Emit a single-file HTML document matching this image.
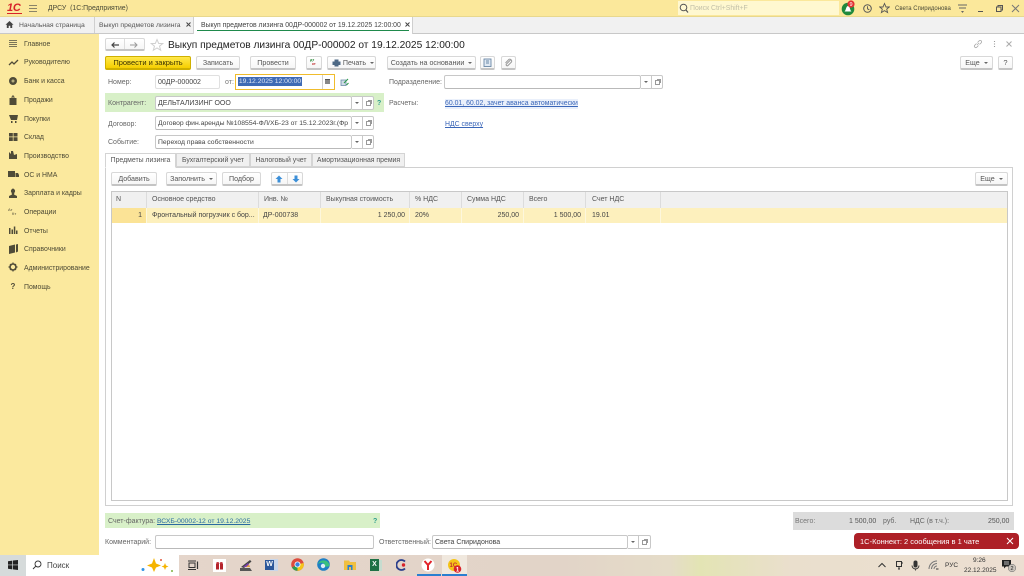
<!DOCTYPE html>
<html lang="ru"><head><meta charset="utf-8"><title>ДРСУ</title>
<style>
html,body{margin:0;padding:0;width:1024px;height:576px;overflow:hidden;background:#fff}
body{font-family:"Liberation Sans","Noto Sans CJK SC",sans-serif;font-size:6.8px;color:#4a4a4a}
#w{position:absolute;left:0;top:0;width:1024px;height:576px;overflow:hidden;filter:blur(.3px)}
.a{position:absolute;white-space:nowrap}
.t{position:absolute;white-space:nowrap;line-height:10px;height:10px;margin-top:1px}
.b{position:absolute;box-sizing:border-box;background:linear-gradient(#fff,#f6f6f6);border:1px solid #d8d8d8;border-bottom:2px solid #c4c4c4;border-radius:2px;text-align:center;line-height:12px;height:14px;color:#555;white-space:nowrap;font-size:7.1px}
.b s{display:inline-block;text-decoration:none;border:2px solid transparent;border-top:2px solid #666;border-bottom:0;margin-left:4px;vertical-align:1px}
.f{position:absolute;box-sizing:border-box;background:#fff;border:1px solid #c8c8c8;border-bottom:1px solid #b9b9b9;border-radius:2px;height:14px;line-height:13px;padding-left:2px;color:#444;white-space:nowrap;overflow:hidden;font-size:7px}
.dd{position:absolute;box-sizing:border-box;background:#fff;border:1px solid #c8c8c8;border-left:0;height:14px;width:22px;border-radius:0 2px 2px 0}
.dd:before{content:"";position:absolute;left:3px;top:5px;border:2px solid transparent;border-top:2px solid #666;border-bottom:0}
.dd:after{content:"";position:absolute;left:10px;top:0;bottom:0;border-left:1px solid #c8c8c8}
.dd i{position:absolute;left:14px;top:4px;width:3px;height:3px;border:1px solid #999;background:#fff}
.dd u{position:absolute;left:15.500px;top:2.500px;width:3px;height:3px;border-top:1px solid #999;border-right:1px solid #999}
.m{position:absolute;left:24px;line-height:10px;height:10px;color:#4d4a35;font-size:6.900px;white-space:nowrap}
.tab{position:absolute;top:153px;height:14px;box-sizing:border-box;background:#f0f0f0;border:1px solid #d4d4d4;text-align:center;line-height:13px;color:#555;white-space:nowrap;font-size:6.900px}
.h{position:absolute;top:192px;height:16px;line-height:15px;background:#f0f0f0;border-right:1px solid #dcdcdc;box-sizing:border-box;padding-left:5px;color:#555;white-space:nowrap;font-size:7px}
.c{position:absolute;top:208px;height:15px;line-height:16px;box-sizing:border-box;padding:0 4px;border-right:1px solid #fdf7dc;color:#444;white-space:nowrap;overflow:hidden;font-size:7px}
.l{font-size:7px;color:#666}
a{color:#3a66b8;text-decoration:underline}
</style></head><body><div id="w">

<!-- top bar -->
<div class="a" style="left:0;top:0;width:1024px;height:17px;background:#fbe89b;border-bottom:1px solid #e8d88e;box-sizing:border-box"></div>
<div class="a" style="left:7px;top:2px;font:italic bold 11px/12px 'Liberation Sans',sans-serif;color:#d8232a;letter-spacing:-.3px">1С</div>
<div class="a" style="left:7px;top:13px;width:15px;height:1px;background:#d8232a"></div>
<svg class="a" style="left:29px;top:4px" width="9" height="9"><path d="M0 1.500H8M0 4.500H8M0 7.500H8" stroke="#8a8468" stroke-width="1"/></svg>
<div class="t" style="left:48px;top:3px;color:#4a4a38;font-size:6.900px">ДРСУ&nbsp; (1С:Предприятие)</div>
<div class="a" style="left:678px;top:1px;width:161px;height:14px;background:#fff8d0"></div>
<svg class="a" style="left:679px;top:3px" width="10" height="11"><circle cx="4.500" cy="4.500" r="3.300" fill="none" stroke="#555" stroke-width="1"/><path d="M7 7L9 9.500" stroke="#555" stroke-width="1.200"/></svg>
<div class="t" style="left:690px;top:3px;color:#c2bfa8;font-size:6.900px">Поиск Ctrl+Shift+F</div>
<svg class="a" style="left:841px;top:0" width="16" height="16"><circle cx="7" cy="9" r="6.300" fill="#1f8a3c"/><path d="M3.500 11.500C5 10.500 5 6 7 6S9 10.500 10.500 11.500Z" fill="#fff"/><circle cx="10" cy="4" r="3.600" fill="#e23232"/><text x="10" y="6" font-size="5.500" font-family="Liberation Sans" fill="#fff" text-anchor="middle">9</text></svg>
<svg class="a" style="left:862px;top:3px" width="11" height="11"><circle cx="5.500" cy="5.500" r="3.800" fill="none" stroke="#555" stroke-width="1"/><path d="M5.500 3.200V5.800L7.300 6.800" fill="none" stroke="#555" stroke-width=".9"/></svg>
<svg class="a" style="left:879px;top:2px" width="11" height="12"><path d="M5.500 1.500L7 5H10.300L7.700 7.200L8.600 10.500L5.500 8.600L2.400 10.500L3.300 7.200L.7 5H4Z" fill="none" stroke="#555" stroke-width=".9"/></svg>
<div class="t" style="left:895px;top:3px;color:#4a4a38;font-size:6px">Света Спиридонова</div>
<svg class="a" style="left:957px;top:4px" width="11" height="10"><path d="M1 1H10M2 4H9" stroke="#666" stroke-width="1"/><path d="M4 7H7L5.500 9Z" fill="#666"/></svg>
<div class="a" style="left:978px;top:11px;width:5px;height:1px;background:#555"></div>
<svg class="a" style="left:995px;top:4px" width="9" height="9"><path d="M1.500 3H6V7.500H1.500ZM3 3V1.500H7.500V6H6" fill="none" stroke="#555" stroke-width="1"/></svg>
<svg class="a" style="left:1011px;top:4px" width="9" height="9"><path d="M1 1L8 8M8 1L1 8" stroke="#777" stroke-width="1"/></svg>

<!-- tab bar -->
<div class="a" style="left:0;top:17px;width:1024px;height:17px;background:#f1f1f1;border-bottom:1px solid #c8c8c8;box-sizing:border-box"></div>
<svg class="a" style="left:5px;top:20px" width="9" height="9"><path d="M4.500 1L8.500 4.800H7.200V8H5.300V5.800H3.700V8H1.800V4.800H.5Z" fill="#444"/></svg>
<div class="t" style="left:19px;top:19.500px;color:#555;font-size:6.800px">Начальная страница</div>
<div class="a" style="left:94px;top:17px;width:1px;height:16px;background:#cfcfcf"></div>
<div class="t" style="left:99px;top:19.500px;color:#555;font-size:6.800px">Выкуп предметов лизинга</div>
<svg class="a" style="left:186px;top:22px" width="5" height="5"><path d="M.5 .5L4.500 4.500M4.500 .5L.5 4.500" stroke="#444" stroke-width="1"/></svg>
<div class="a" style="left:193px;top:17px;width:220px;height:17px;background:#fff;border-left:1px solid #cfcfcf;border-right:1px solid #cfcfcf;box-sizing:border-box"></div>
<div class="a" style="left:197px;top:30px;width:212px;height:1px;background:#1f8a4c"></div>
<div class="t" style="left:201px;top:19.500px;color:#444;font-size:6.870px">Выкуп предметов лизинга 00ДР-000002 от 19.12.2025 12:00:00</div>
<svg class="a" style="left:405px;top:22px" width="5" height="5"><path d="M.5 .5L4.500 4.500M4.500 .5L.5 4.500" stroke="#444" stroke-width="1"/></svg>

<!-- sidebar -->
<div class="a" style="left:0;top:34px;width:99px;height:521px;background:#fbe99e"></div>
<svg class="a" style="left:8px;top:39px" width="14" height="260" fill="#4f4b38">
<path d="M1 1.500H9M1 3.500H9M1 5.500H9M1 7.500H9" stroke="#7a7558" stroke-width=".9"/>
<path d="M1 26L4 23L6 25L10 21" fill="none" stroke="#4f4b38" stroke-width="1.300"/>
<circle cx="5" cy="42" r="4"/><circle cx="5" cy="42" r="1.500" fill="#b5ad7e"/>
<path d="M1.500 59H8.500V66H1.500ZM3.500 59C3.500 55.500 6.500 55.500 6.500 59H5.500C5.500 57 4.500 57 4.500 59Z"/>
<path d="M1 76H10L9 81H3ZM3 82H4.500V84H3ZM7 82H8.500V84H7Z"/>
<g transform="translate(0,-1)"><path d="M1 95H4.800V98.500H1ZM5.500 95H9.500V98.500H5.500ZM1 99.300H4.800V103H1ZM5.500 99.300H9.500V103H5.500Z"/></g>
<g transform="translate(0,-1)"><path d="M1 121V114L3 116V113H5L6 117L9 116V121Z"/></g>
<path d="M0 132H7V138H0ZM7.500 134H10L11 136V138H7.500Z"/>
<g transform="translate(0,3)"><path d="M3.500 150.500A2 2.300 0 1 1 6.500 150.500L6 152.500L9 154V156H1V154L4 152.500Z"/></g>
<text x="0" y="172" font-size="4" font-family="Liberation Sans">Aт</text><text x="4" y="176" font-size="4" font-family="Liberation Sans">Кт</text>
<g transform="translate(0,-1)"><path d="M1 190H2.500V196H1ZM3.500 191.500H5V196H3.500ZM5.800 188.500H7.300V196H5.800ZM8 192.500H9.500V196H8Z"/></g>
<g transform="translate(0,-1)"><path d="M1 208L7 206.500V214.500L1 216ZM8 206.500L10 206V213.500L8 214.500Z"/></g>
<g transform="translate(0,-2)"><circle cx="5" cy="230" r="3" fill="none" stroke="#4f4b38" stroke-width="1.600"/><path d="M5 225.500V227M5 233V234.500M.5 230H2M8 230H9.500M2 227L3 228M7 232L8 233M8 227L7 228M3 232L2 233" stroke="#4f4b38" stroke-width="1.200"/></g>
<g transform="translate(0,-2)"><text x="2.500" y="252" font-size="8" font-weight="bold" font-family="Liberation Sans">?</text></g>
</svg>
<div class="m" style="top:40px">Главное</div>
<div class="m" style="top:58px">Руководителю</div>
<div class="m" style="top:77px">Банк и касса</div>
<div class="m" style="top:96px">Продажи</div>
<div class="m" style="top:115px">Покупки</div>
<div class="m" style="top:133px">Склад</div>
<div class="m" style="top:152px">Производство</div>
<div class="m" style="top:171px">ОС и НМА</div>
<div class="m" style="top:189px">Зарплата и кадры</div>
<div class="m" style="top:208px">Операции</div>
<div class="m" style="top:227px">Отчеты</div>
<div class="m" style="top:245px">Справочники</div>
<div class="m" style="top:264px">Администрирование</div>
<div class="m" style="top:283px">Помощь</div>

<!-- title -->
<div class="b" style="left:105px;top:38px;width:40px;height:13px"></div>
<div class="a" style="left:124px;top:39px;width:1px;height:10px;background:#ddd"></div>
<svg class="a" style="left:110px;top:41px" width="30" height="8"><path d="M9 4H2M4.500 1.500L2 4L4.500 6.500" fill="none" stroke="#444" stroke-width="1.200"/><path d="M20 4H27M24.500 1.500L27 4L24.500 6.500" fill="none" stroke="#999" stroke-width="1"/></svg>
<svg class="a" style="left:150px;top:38px" width="14" height="14"><path d="M7 1.500L8.700 5.500H12.800L9.500 8.200L10.700 12.300L7 10L3.300 12.300L4.500 8.200L1.200 5.500H5.300Z" fill="none" stroke="#d0d0d0" stroke-width="1"/></svg>
<div class="a" style="left:168px;top:39px;font-size:10.200px;line-height:14px;color:#222">Выкуп предметов лизинга 00ДР-000002 от 19.12.2025 12:00:00</div>
<svg class="a" style="left:973px;top:39px" width="10" height="10"><path d="M4 6L6 4M3.500 4.500L1.800 6.200A1.400 1.400 0 0 0 3.800 8.200L5.500 6.500M4.500 3.500L6.200 1.800A1.400 1.400 0 0 1 8.200 3.800L6.500 5.500" fill="none" stroke="#aaa" stroke-width=".8"/></svg>
<svg class="a" style="left:992px;top:40px" width="5" height="8"><path d="M2.500 1V2M2.500 3.500V4.500M2.500 6V7" stroke="#999" stroke-width="1.100"/></svg>
<svg class="a" style="left:1005px;top:40px" width="8" height="8"><path d="M1.500 1.500L6.500 6.500M6.500 1.500L1.500 6.500" stroke="#aaa" stroke-width="1"/></svg>

<!-- command bar -->
<div class="b" style="left:105px;top:56px;width:86px;background:linear-gradient(#ffe84d,#f6cf00);border-color:#cfb000;color:#3b3200;font-size:7.500px">Провести и закрыть</div>
<div class="b" style="left:196px;top:56px;width:44px">Записать</div>
<div class="b" style="left:250px;top:56px;width:46px">Провести</div>
<div class="b" style="left:306px;top:56px;width:16px"></div>
<div class="a" style="left:310px;top:58px;font-size:3.800px;line-height:4px;color:#2c8a3a;font-weight:bold">дт</div>
<div class="a" style="left:312px;top:62px;font-size:3.800px;line-height:4px;color:#c03030;font-weight:bold">кт</div>
<div class="b" style="left:327px;top:56px;width:49px;padding-left:14px">Печать<s></s></div>
<svg class="a" style="left:332px;top:59px" width="9" height="8"><path d="M2.500 0.500H6.500V2.500H2.500ZM.5 2.500H8.500V6H6.500V7.500H2.500V6H.5Z" fill="#4f6a86"/></svg>
<div class="b" style="left:387px;top:56px;width:89px">Создать на основании<s></s></div>
<div class="b" style="left:480px;top:56px;width:15px"></div>
<svg class="a" style="left:483px;top:58px" width="10" height="10"><rect x="1" y="1" width="7" height="7.500" fill="#dfe8f2" stroke="#6a88a6" stroke-width=".9"/><path d="M3 3H6M3 5H6" stroke="#6a88a6"/></svg>
<div class="b" style="left:501px;top:56px;width:15px"></div>
<svg class="a" style="left:504px;top:58px" width="9" height="10"><path d="M6.500 2L2.500 6A1 1 0 0 0 4 7.500L7.500 4A2 2 0 0 0 5 1.300L1.500 5" fill="none" stroke="#999" stroke-width="1"/></svg>
<div class="b" style="left:960px;top:56px;width:33px">Еще<s></s></div>
<div class="b" style="left:998px;top:56px;width:15px;font-size:7.500px">?</div>

<!-- form row 1 -->
<div class="t l" style="left:108px;top:77px">Номер:</div>
<div class="f" style="left:155px;top:75px;width:65px;border-color:#e0e0e0">00ДР-000002</div>
<div class="t l" style="left:225px;top:77px;color:#777">от:</div>
<div class="a" style="left:235px;top:74px;width:100px;height:16px;box-sizing:border-box;background:#fff;border:1px solid #f0bc2c"></div>
<div class="a" style="left:238px;top:77px;width:64px;height:9px;background:#3e6ab5;color:#dfe7f5;line-height:10px;font-size:6.800px;text-align:center;overflow:hidden">19.12.2025 12:00:00</div>
<div class="a" style="left:322px;top:75px;width:1px;height:14px;background:#d0d0d0"></div>
<div class="a" style="left:325px;top:79px;width:5px;height:4px;background:#888;border-top:1px solid #555"></div>
<svg class="a" style="left:340px;top:78px" width="9" height="9"><path d="M1 2H6V7.500H1Z" fill="#cfdbe6" stroke="#6688a5" stroke-width=".8"/><path d="M4 5L8 1M6.500 7L8.500 5" stroke="#2c9a4a" stroke-width="1.100"/></svg>
<div class="t l" style="left:389px;top:77px">Подразделение:</div>
<div class="f" style="left:444px;top:75px;width:197px"></div>
<div class="dd" style="left:641px;top:75px"><i></i><u></u></div>

<!-- row 2 -->
<div class="a" style="left:105px;top:93px;width:279px;height:19px;background:#d8f0c8"></div>
<div class="t l" style="left:108px;top:98px">Контрагент:</div>
<div class="f" style="left:155px;top:96px;width:197px">ДЕЛЬТАЛИЗИНГ ООО</div>
<div class="dd" style="left:352px;top:96px"><i></i><u></u></div>
<div class="t" style="left:377px;top:98px;color:#2e9c8c;font-weight:bold;font-size:7px">?</div>
<div class="t l" style="left:389px;top:98px">Расчеты:</div>
<div class="t" style="left:445px;top:98px;font-size:6.900px;background:#eaf0fb"><a>60.01, 60.02, зачет аванса автоматически</a></div>

<!-- row 3 -->
<div class="t l" style="left:108px;top:119px">Договор:</div>
<div class="f" style="left:155px;top:116px;width:197px;font-size:6.800px">Договор фин.аренды №108554-ФЛ/ХБ-23 от 15.12.2023г.(Фр</div>
<div class="dd" style="left:352px;top:116px"><i></i><u></u></div>
<div class="t" style="left:445px;top:119px;font-size:6.900px"><a>НДС сверху</a></div>

<!-- row 4 -->
<div class="t l" style="left:108px;top:137px">Событие:</div>
<div class="f" style="left:155px;top:135px;width:197px;font-size:6.800px">Переход права собственности</div>
<div class="dd" style="left:352px;top:135px"><i></i><u></u></div>

<!-- tabs -->
<div class="a" style="left:105px;top:167px;width:908px;height:339px;box-sizing:border-box;border:1px solid #d0d0d0;background:#fff"></div>
<div class="tab" style="left:105px;width:71px;background:#fff;border-bottom:1px solid #fff;height:15px">Предметы лизинга</div>
<div class="tab" style="left:176px;width:74px">Бухгалтерский учет</div>
<div class="tab" style="left:250px;width:62px">Налоговый учет</div>
<div class="tab" style="left:312px;width:93px">Амортизационная премия</div>

<div class="b" style="left:111px;top:172px;width:46px">Добавить</div>
<div class="b" style="left:166px;top:172px;width:51px">Заполнить<s></s></div>
<div class="b" style="left:222px;top:172px;width:39px">Подбор</div>
<div class="b" style="left:271px;top:172px;width:32px"></div>
<div class="a" style="left:287px;top:173px;width:1px;height:11px;background:#ddd"></div>
<svg class="a" style="left:275px;top:175px" width="25" height="8"><path d="M4 .5L7.500 4H5.500V7.500H2.500V4H.5Z" fill="#3c8fd8"/><path d="M21 7.500L24.500 4H22.500V.5H19.500V4H17.500Z" fill="#3c8fd8"/></svg>
<div class="b" style="left:975px;top:172px;width:33px">Еще<s></s></div>

<!-- table -->
<div class="a" style="left:111px;top:191px;width:897px;height:310px;box-sizing:border-box;border:1px solid #c8c8c8;background:#fff"></div>
<div class="h" style="left:112px;width:35px;padding-left:4px">N</div>
<div class="h" style="left:147px;width:112px">Основное средство</div>
<div class="h" style="left:259px;width:62px">Инв. №</div>
<div class="h" style="left:321px;width:89px">Выкупная стоимость</div>
<div class="h" style="left:410px;width:52px">% НДС</div>
<div class="h" style="left:462px;width:62px">Сумма НДС</div>
<div class="h" style="left:524px;width:62px">Всего</div>
<div class="h" style="left:586px;width:75px;padding-left:6px">Счет НДС</div>
<div class="h" style="left:661px;width:346px;border-right:0"></div>
<div class="a" style="left:112px;top:208px;width:895px;height:15px;background:#fdf0bd"></div>
<div class="c" style="left:112px;width:35px;text-align:right;background:#fbe396">1</div>
<div class="c" style="left:147px;width:112px;padding-left:5px">Фронтальный погрузчик с бор...</div>
<div class="c" style="left:259px;width:62px">ДР-000738</div>
<div class="c" style="left:321px;width:89px;text-align:right">1 250,00</div>
<div class="c" style="left:410px;width:52px;padding-left:5px">20%</div>
<div class="c" style="left:462px;width:62px;text-align:right">250,00</div>
<div class="c" style="left:524px;width:62px;text-align:right">1 500,00</div>
<div class="c" style="left:586px;width:75px;padding-left:6px">19.01</div>

<!-- footer -->
<div class="a" style="left:105px;top:513px;width:275px;height:15px;background:#d8f0c8"></div>
<div class="t l" style="left:108px;top:516px">Счет-фактура:</div>
<div class="t" style="left:157px;top:516px;font-size:6.800px"><a style="color:#2a6aa0">ВСХБ-00002-12 от 19.12.2025</a></div>
<div class="t" style="left:373px;top:516px;color:#2e9c8c;font-weight:bold;font-size:7px">?</div>
<div class="a" style="left:793px;top:512px;width:221px;height:18px;background:#dcdcdc"></div>
<div class="t l" style="left:795px;top:516px;color:#777">Всего:</div>
<div class="t" style="left:849px;top:516px;font-size:7px;color:#555">1 500,00</div>
<div class="t l" style="left:883px;top:516px">руб.</div>
<div class="t l" style="left:910px;top:516px">НДС (в т.ч.):</div>
<div class="t" style="left:988px;top:516px;font-size:7px;color:#555">250,00</div>
<div class="t l" style="left:105px;top:537px">Комментарий:</div>
<div class="f" style="left:155px;top:535px;width:219px"></div>
<div class="t l" style="left:379px;top:537px">Ответственный:</div>
<div class="f" style="left:432px;top:535px;width:196px">Света Спиридонова</div>
<div class="dd" style="left:628px;top:535px;width:23px"><i></i><u></u></div>

<div class="a" style="left:854px;top:533px;width:165px;height:16px;background:#ad2027;border-radius:4px;color:#fff;line-height:17px;font-size:7.500px;padding-left:6px;box-sizing:border-box">1С-Коннект: 2 сообщения в 1 чате</div>
<svg class="a" style="left:1006px;top:537px" width="8" height="8"><path d="M1 1L7 7M7 1L1 7" stroke="#fff" stroke-width="1"/></svg>

<!-- taskbar -->
<div class="a" style="left:0;top:555px;width:1024px;height:21px;background:linear-gradient(90deg,#e6d6cc 0,#e2d4c8 560px,#e5dcc8 670px,#e3e4b4 700px,#eadfcd 790px,#ecdfd2 1024px)"></div>
<div class="a" style="left:0;top:555px;width:26px;height:21px;background:#d6dbdb"></div>
<svg class="a" style="left:8px;top:560px" width="10" height="10" fill="#222"><path d="M0 1.200L4.300.6V4.600H0ZM5 .5L10 0V4.600H5ZM0 5.300H4.300V9.400L0 8.800ZM5 5.300H10V10L5 9.400Z"/></svg>
<div class="a" style="left:26px;top:555px;width:153px;height:21px;background:#fff"></div>
<svg class="a" style="left:32px;top:560px" width="10" height="10"><circle cx="6" cy="4" r="3" fill="none" stroke="#333" stroke-width=".9"/><path d="M3.800 6.200L1 9" stroke="#333" stroke-width="1"/></svg>
<div class="t" style="left:47px;top:560px;font-size:8px;color:#444">Поиск</div>
<svg class="a" style="left:140px;top:557px" width="36" height="18"><path d="M14 1L16 6.500L21 8.500L16 10.500L14 15L12 10.500L7 8.500L12 6.500Z" fill="#f5b400"/><path d="M25 6L26 8.500L28.500 9.500L26 10.500L25 13L24 10.500L21.500 9.500L24 8.500Z" fill="#f5b400"/><circle cx="3" cy="12.500" r="1.500" fill="#2f93e6"/><circle cx="21" cy="3" r="1" fill="#e2553a"/><circle cx="32" cy="14" r="1" fill="#7cb342"/></svg>
<svg class="a" style="left:187px;top:560px" width="12" height="11"><path d="M1 1H9M1 9.500H9M2 3H8V7.500H2Z" fill="none" stroke="#333" stroke-width="1"/><path d="M10.500 1.500V9" stroke="#333" stroke-width="1.200"/></svg>
<div class="a" style="left:213px;top:559px;width:13px;height:13px;background:#fff"></div>
<svg class="a" style="left:215px;top:561px" width="9" height="9"><path d="M1 2.500H8V8.500H1Z" fill="#b4242c"/><path d="M4.500 2.500V8.500" stroke="#fff"/><path d="M1.500 1H3.500L4.500 2.500H1.500ZM7.500 1H5.500L4.500 2.500H7.500Z" fill="#c8404a"/></svg>
<svg class="a" style="left:239px;top:558px" width="14" height="14"><path d="M1 10L11 10L13 13H1Z" fill="#555"/><path d="M2 9L11 2L12.500 3.500L5 10Z" fill="#444"/><path d="M4 9L9 5L11 9Z" fill="#7a3fb0"/><path d="M7 9L10 6.500L11 9Z" fill="#e2a23a"/></svg>
<div class="a" style="left:270px;top:559px;width:8px;height:12px;background:#c8d6ea"></div>
<div class="a" style="left:265px;top:560px;width:9px;height:10px;background:#2b579a;color:#fff;font-size:7px;line-height:10px;text-align:center;font-weight:bold">W</div>
<svg class="a" style="left:291px;top:558px" width="13" height="13"><circle cx="6.500" cy="6.500" r="6.300" fill="#dd4b3e"/><path d="M6.500 6.500L1 9.500A6.300 6.300 0 0 0 6.500 12.800Z" fill="#2f9e4f"/><path d="M6.500 6.500L6.500 12.800A6.300 6.300 0 0 0 12.600 5Z" fill="#f5c518"/><circle cx="6.500" cy="6.500" r="3" fill="#fff"/><circle cx="6.500" cy="6.500" r="2.200" fill="#3b82e0"/></svg>
<svg class="a" style="left:317px;top:558px" width="13" height="13"><circle cx="6.500" cy="6.500" r="6.300" fill="#1f7fc4"/><path d="M1 6C3 1 11 1 12.500 7C12.500 9 8 9 7 8C9 5 4 3.500 1 6Z" fill="#39c07e"/><circle cx="6" cy="8" r="2.200" fill="#fff" opacity=".85"/></svg>
<svg class="a" style="left:344px;top:559px" width="12" height="12"><path d="M0 1.500H5L6 3H12V11H0Z" fill="#f0c040"/><path d="M3.500 6H8.500V11H7V8H5V11H3.500Z" fill="#2a7fd0"/></svg>
<div class="a" style="left:376px;top:560px;width:6px;height:11px;background:#c6dccf"></div>
<div class="a" style="left:370px;top:559px;width:9px;height:12px;background:#1e7145;color:#fff;font-size:7px;line-height:12px;text-align:center;font-weight:bold">X</div>
<svg class="a" style="left:396px;top:559px" width="12" height="12"><path d="M9 2.500A5 5 0 1 0 9 9.500" fill="none" stroke="#2b3f8c" stroke-width="1.800"/><circle cx="7.500" cy="6" r="1.700" fill="#d8232a"/></svg>
<svg class="a" style="left:421px;top:558px" width="14" height="14"><circle cx="7" cy="7" r="6.500" fill="#fff"/><path d="M3.500 3L7 7L10.500 3M7 7V12" fill="none" stroke="#e2232a" stroke-width="2"/></svg>
<div class="a" style="left:417px;top:574px;width:24px;height:2px;background:#2a7fd0"></div>
<div class="a" style="left:442px;top:555px;width:25px;height:21px;background:#f0e8de"></div>
<div class="a" style="left:442px;top:574px;width:25px;height:2px;background:#2a7fd0"></div>
<svg class="a" style="left:447px;top:558px" width="16" height="16"><circle cx="7" cy="7" r="6" fill="#f5c518"/><text x="2.500" y="9" font-size="6" font-weight="bold" font-family="Liberation Sans" fill="#c23030">1С</text><circle cx="10.500" cy="11" r="3.800" fill="#d8232a"/><text x="10.500" y="13.300" font-size="6" font-weight="bold" font-family="Liberation Sans" fill="#fff" text-anchor="middle">1</text></svg>

<!-- tray -->
<svg class="a" style="left:877px;top:562px" width="10" height="7"><path d="M1.500 5L5 1.500L8.500 5" fill="none" stroke="#333" stroke-width="1"/></svg>
<svg class="a" style="left:895px;top:560px" width="9" height="11"><path d="M1.500 1.500H6.500V6.500H1.500ZM3 9H5M4 6.500V9" fill="none" stroke="#333" stroke-width="1"/><path d="M6.500 3H8" stroke="#333"/></svg>
<svg class="a" style="left:911px;top:560px" width="9" height="11"><rect x="2.500" y="0.500" width="4" height="7" rx="2" fill="#333"/><path d="M1 5.500A3.500 3.500 0 0 0 8 5.500M4.500 9V10.500" fill="none" stroke="#333" stroke-width=".9"/></svg>
<svg class="a" style="left:928px;top:560px" width="11" height="11"><path d="M1 9A8 8 0 0 1 9 1M3.500 9A5.500 5.500 0 0 1 9 3.500M6 9A3 3 0 0 1 9 6" fill="none" stroke="#777" stroke-width="1"/><path d="M8 9H10.500" stroke="#333"/></svg>
<div class="t" style="left:945px;top:560px;font-size:6.500px;color:#333">РУС</div>
<div class="t" style="left:973px;top:555px;font-size:6.500px;color:#333">9:26</div>
<div class="t" style="left:964px;top:565px;font-size:6.500px;color:#333">22.12.2025</div>
<svg class="a" style="left:1001px;top:559px" width="16" height="14"><path d="M1 1H10V7.500H5L3 9.500V7.500H1Z" fill="#222"/><path d="M3 3H8M3 5H8" stroke="#eee" stroke-width=".7"/><circle cx="11" cy="9" r="3.800" fill="#c9c3bb" stroke="#666" stroke-width=".5"/><text x="11" y="11" font-size="5.500" font-family="Liberation Sans" fill="#222" text-anchor="middle">2</text></svg>
</div></body></html>
